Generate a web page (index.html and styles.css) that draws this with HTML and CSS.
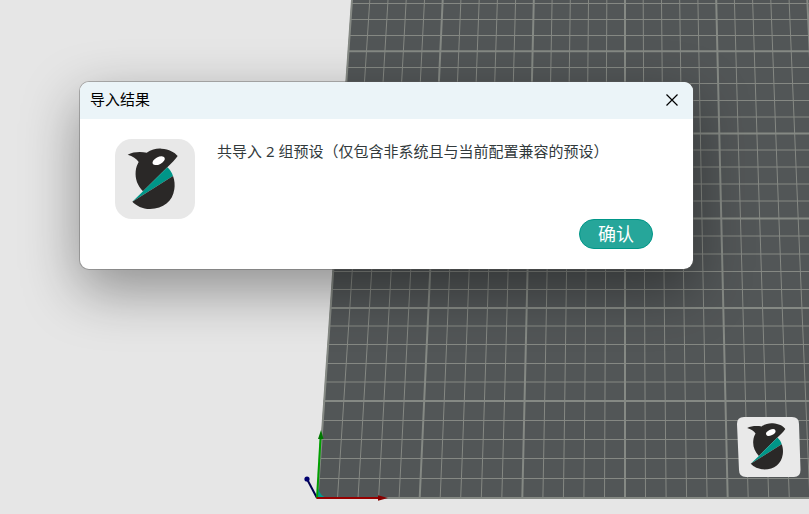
FILE: index.html
```html
<!DOCTYPE html>
<html lang="zh-CN">
<head>
<meta charset="utf-8">
<meta name="viewport" content="width=device-width, initial-scale=1">
<title>导入结果</title>
<link rel="stylesheet" href="styles.css">
</head>
<body>
<svg class="scene" viewBox="0 0 809 514" preserveAspectRatio="xMinYMin slice" aria-hidden="true">
  <defs>
    <symbol id="orca" viewBox="0 0 240 240">
      <path fill="#2a2827" d="M38 47C55 38 78 38 95 41C110 31 125 28 139 29C163 31 178 39 188 51C180 63 170 72 157 85L84 157C67 139 60 120 62 97C63 84 67 77 71 69C65 58 53 52 38 47Z"/>
      <path fill="#009688" d="M157 85C165 92 171 101 174 111L52 188L84 157Z"/>
      <path fill="#2a2827" d="M174 111C179 124 180 139 178 151C173 187 145 210 105 210C82 210 64 200 52 188Z"/>
      <ellipse cx="131" cy="65" rx="20" ry="11" transform="rotate(-27 131 65)" fill="#fff"/>
    </symbol>
  </defs>
  <path fill="#525657" d="M351.5 0H809V498H317Z"/>
  <g class="minor">
    <path d="M369.8 0L337.5 498M388 0L358 498M406.2 0L378.6 498M424.5 0L399.1 498M460.9 0L440.2 498M479.2 0L460.7 498M497.4 0L481.3 498M515.6 0L501.8 498M552.1 0L542.9 498M570.3 0L563.4 498M588.5 0L583.9 498M606.8 0L604.5 498M643.2 0L645.5 498M661.5 0L666.1 498M679.7 0L686.6 498M697.9 0L707.1 498M734.4 0L748.2 498M752.6 0L768.7 498M770.8 0L789.3 498M789.1 0L809.8 498"/>
    <path d="M351.3 3.5H809M350.1 19.5H809M349 35.5H809M347 67.5H809M345.7 83.5H809M344.5 100.5H809M343.3 117H809M341 150H809M340 167H809M338.7 184H809M337.6 201H809M335 236H809M334 254H809M332.7 271.5H809M331.4 289.5H809M329 326H809M327.6 344.5H809M326.3 363.5H809M325 382H809M322.4 420.5H809M321 439.5H809M319.7 458.5H809M318.4 478.5H809"/>
  </g>
  <g class="major">
    <path d="M352 0L317.5 498M442.7 0L419.7 498M533.8 0L522.3 498M625 0V498M716.2 0L727.7 498M807.3 0L830.3 498"/>
    <path d="M348 51.2H809M342 133.5H809M336.4 218.5H809M330.2 308H809M323.8 401H809M317 498H809"/>
  </g>
  <path fill="#e9e9e9" d="M744 417H792Q799 417 799 424L800.5 470Q800.5 477 794 477H746Q739 477 739 470L737 424Q737 417 744 417Z"/>
  <use href="#orca" x="737" y="416" width="62" height="61"/>
  <path fill="#009b8e" d="M317 498L318 488Q320 496 327 498Z"/>
  <path d="M317 498L307.5 480" stroke="#00004f" stroke-width="2"/>
  <circle cx="307" cy="479" r="2.6" fill="#00006e"/>
  <path d="M317 498L320.5 438" stroke="#00a000" stroke-width="2"/>
  <path d="M321 430L318 439H323.5Z" fill="#007800"/>
  <path d="M316.5 498H380" stroke="#960000" stroke-width="2"/>
  <path d="M388 498L378 495.2V500.8Z" fill="#850000"/>
</svg>
<main class="stage">
  <section class="dialog" role="dialog" aria-labelledby="dialog-title" aria-describedby="dialog-message">
    <header class="titlebar">
      <h1 class="title" id="dialog-title">导入结果</h1>
      <button class="close" type="button" aria-label="关闭">
        <svg class="cross" viewBox="0 0 12 12" aria-hidden="true"><path d="M.5.5L11.5 11.5M11.5.5L.5 11.5"/></svg>
      </button>
    </header>
    <div class="content">
      <svg class="logo" viewBox="0 0 240 240" aria-hidden="true">
        <rect width="240" height="240" rx="50" fill="#e8e8e8"/>
        <use href="#orca"/>
      </svg>
      <p class="message" id="dialog-message">共导入 2 组预设（仅包含非系统且与当前配置兼容的预设）</p>
    </div>
    <footer class="actions">
      <button class="confirm" type="button">确认</button>
    </footer>
  </section>
</main>
</body>
</html>
```
FILE: styles.css
```css
* {
  box-sizing: border-box;
}

body {
  margin: 0;
  min-height: 100vh;
  background: #e6e6e6;
  font-family: "Noto Sans", "Noto Sans CJK SC", sans-serif;
  overflow: hidden;
}

.scene {
  position: absolute;
  inset: 0;
  width: 100%;
  height: 100%;
}

.minor,
.major {
  fill: none;
  stroke: #858883;
  stroke-width: 1;
}

.major {
  stroke: #858984;
  stroke-width: 2;
}

.stage {
  position: relative;
  padding: 81px 79px;
}

.dialog {
  max-width: 615px;
  overflow: hidden;
  border: 1px solid rgba(90, 90, 90, 0.4);
  border-radius: 10px;
  background: #fff;
  background-clip: padding-box;
  box-shadow: 0 20px 56px rgba(0, 0, 0, 0.38);
}

.titlebar {
  display: flex;
  justify-content: space-between;
  height: 37px;
  padding-left: 10px;
  background: #ebf4f8;
}

.title {
  margin: 0;
  color: #000;
  font-size: 15px;
  font-weight: 400;
  line-height: 34px;
}

.close {
  display: grid;
  place-items: center;
  width: 42px;
  height: 36px;
  padding: 0;
  border: 0;
  background: transparent;
}

.cross {
  width: 12px;
  height: 12px;
  fill: none;
  stroke: #000;
  stroke-width: 1.2;
}

.content {
  display: flex;
  gap: 22px;
  padding: 20px 35px 0;
}

.logo {
  flex: none;
  width: 80px;
  height: 80px;
}

.message {
  margin: 2px 0 0;
  color: #323a3c;
  font-size: 15px;
  line-height: 20px;
}

.actions {
  display: flex;
  justify-content: flex-end;
  padding: 0 40px 20px;
}

.confirm {
  height: 30px;
  padding: 0 18px;
  border: 1px solid #009688;
  border-radius: 15px;
  background: #26a69a;
  color: #fff;
  font: inherit;
  font-size: 18px;
  line-height: 26px;
}
```
